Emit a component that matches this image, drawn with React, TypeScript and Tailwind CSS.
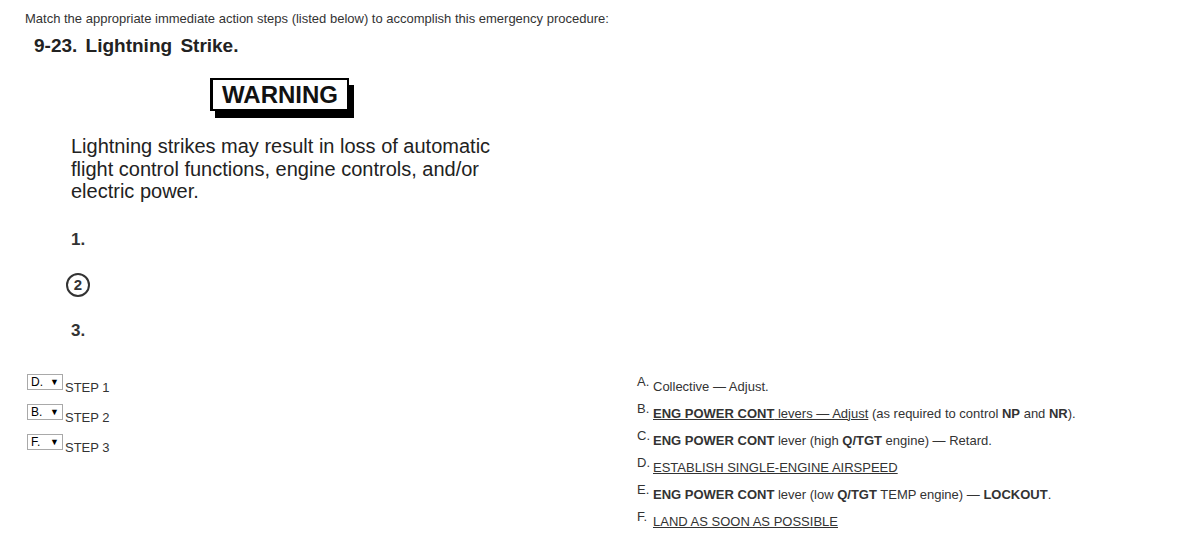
import React from "react";

const steps = [
  { pick: "D.", label: "STEP 1" },
  { pick: "B.", label: "STEP 2" },
  { pick: "F.", label: "STEP 3" },
];

function Choice({ letter, children }: { letter: string; children: React.ReactNode }) {
  return (
    <div className="flex h-[27px] items-start">
      <span className="w-[16px] pt-[1px] text-[13px] leading-[13px]">{letter}</span>
      <span className="pt-[5px] text-[13px] leading-[16px]">{children}</span>
    </div>
  );
}

export default function App() {
  return (
    <div className="min-h-[558px] bg-white pl-[25px] pt-[11px] text-[#333] [font-family:'Liberation_Sans',Arial,sans-serif]">
      <p className="text-[13px] leading-[16px]">
        Match the appropriate immediate action steps (listed below) to accomplish this emergency procedure:
      </p>

      <div className="pl-[9px] pt-[8px] text-[#222]">
        <h2 className="text-[19px] font-bold leading-[22px] [word-spacing:3px]">9-23. Lightning Strike.</h2>

        <div className="pl-[176px] pt-[21px]">
          <div className="inline-block border-2 border-l-[3px] border-black px-[9px] text-[24px] font-bold leading-[29px] text-[#111] shadow-[5px_7px_0_0_#000]">
            WARNING
          </div>
        </div>

        <p className="pl-[37px] pt-[24px] text-[20px] leading-[22.5px]">
          Lightning strikes may result in loss of automatic
          <br />
          flight control functions, engine controls, and/or
          <br />
          electric power.
        </p>

        <div className="pl-[37px] pt-[27px] text-[17px] font-bold leading-[20px] text-[#333]">
          <div>1.</div>
          <div className="mt-[23px] -ml-[5px] flex h-[24px] w-[24px] items-center justify-center rounded-full border-2 border-[#333] text-[15px]">
            2
          </div>
          <div className="mt-[24px]">3.</div>
        </div>
      </div>

      <div className="mt-[33px] flex">
        <div className="w-[612px] pl-[2px]">
          {steps.map((s) => (
            <div key={s.label} className="flex h-[30px] items-start">
              <div className="flex h-[16px] w-[36px] items-center justify-between border border-[#a9a9a9] px-[3px] text-[12px] leading-[14px] text-black">
                <span>{s.pick}</span>
                <span className="text-[9px]">▼</span>
              </div>
              <span className="pl-[2px] pt-[6px] text-[13px] leading-[16px]">{s.label}</span>
            </div>
          ))}
        </div>

        <div>
          <Choice letter="A.">Collective — Adjust.</Choice>
          <Choice letter="B.">
            <span className="underline">
              <b>ENG POWER CONT</b> levers — Adjust
            </span>{" "}
            (as required to control <b>NP</b> and <b>NR</b>).
          </Choice>
          <Choice letter="C.">
            <b>ENG POWER CONT</b> lever (high <b>Q/TGT</b> engine) — Retard.
          </Choice>
          <Choice letter="D.">
            <span className="underline">ESTABLISH SINGLE-ENGINE AIRSPEED</span>
          </Choice>
          <Choice letter="E.">
            <b>ENG POWER CONT</b> lever (low <b>Q/TGT</b> TEMP engine) — <b>LOCKOUT</b>.
          </Choice>
          <Choice letter="F.">
            <span className="underline">LAND AS SOON AS POSSIBLE</span>
          </Choice>
        </div>
      </div>
    </div>
  );
}
